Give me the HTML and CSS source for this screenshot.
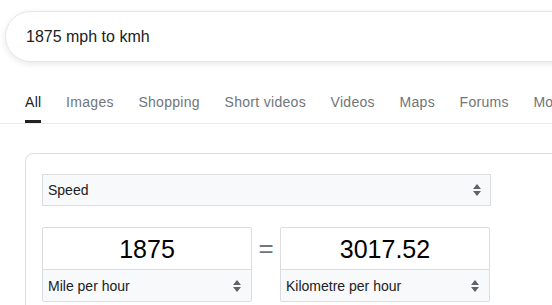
FILE: index.html
```html
<!DOCTYPE html>
<html lang="en">
<head>
    <meta charset="UTF-8">
    <meta name="viewport" content="width=device-width, initial-scale=1.0">
    <title>1875 mph to kmh</title>
    <link rel="stylesheet" href="styles.css">
</head>
<body>
    <div class="search-box">
        <span class="search-text">1875 mph to kmh</span>
    </div>

    <nav class="tabs">
        <span class="tab active">All</span>
        <span class="tab">Images</span>
        <span class="tab">Shopping</span>
        <span class="tab">Short videos</span>
        <span class="tab">Videos</span>
        <span class="tab">Maps</span>
        <span class="tab">Forums</span>
        <span class="tab">More</span>
    </nav>

    <div class="card">
        <div class="select wide">
            <span>Speed</span>
            <span class="arrows"><i class="up"></i><i class="down"></i></span>
        </div>

        <div class="convert-row">
            <div class="unit-box">
                <div class="value">1875</div>
                <div class="select">
                    <span>Mile per hour</span>
                    <span class="arrows"><i class="up"></i><i class="down"></i></span>
                </div>
            </div>
            <div class="equals">=</div>
            <div class="unit-box">
                <div class="value">3017.52</div>
                <div class="select">
                    <span>Kilometre per hour</span>
                    <span class="arrows"><i class="up"></i><i class="down"></i></span>
                </div>
            </div>
        </div>
    </div>
</body>
</html>
```

FILE: styles.css
```css
body {
    margin: 0;
    font-family: Arial, "Liberation Sans", sans-serif;
    color: #202124;
    background-color: #fff;
    overflow: hidden;
}
.search-box {
    display: flex;
    align-items: center;
    box-sizing: border-box;
    width: 760px;
    height: 51px;
    margin: 11px 0 0 5px;
    padding-left: 20px;
    border: 1px solid #e4e5e7;
    border-radius: 26px;
    box-shadow: 0 2px 6px rgba(32,33,36,0.1);
}
.search-text {
    font-size: 16px;
    color: #202124;
}
.tabs {
    display: flex;
    gap: 24.6px;
    margin-top: 30px;
    padding-left: 25px;
    border-bottom: 1px solid #ebebeb;
    white-space: nowrap;
}
.tab {
    font-size: 14px;
    line-height: 20px;
    letter-spacing: 0.3px;
    padding-bottom: 8px;
    border-bottom: 3px solid transparent;
    color: #70757a;
}
.tab.active {
    color: #202124;
    border-bottom-color: #202124;
}
.card {
    width: 640px;
    margin: 29px 0 0 25px;
    padding: 20px 16px;
    border: 1px solid #dadce0;
    border-radius: 8px;
}
.select {
    display: flex;
    align-items: center;
    justify-content: space-between;
    box-sizing: border-box;
    height: 31px;
    padding: 0 9px 0 5px;
    background-color: #f8f9fa;
    font-size: 14px;
    color: #202124;
}
.select.wide {
    width: 449px;
    height: 32px;
    border: 1px solid #dadce0;
}
.arrows {
    display: flex;
    flex-direction: column;
    gap: 2px;
}
.arrows i {
    width: 0;
    height: 0;
    border-left: 4px solid transparent;
    border-right: 4px solid transparent;
}
.arrows .up {
    border-bottom: 5px solid #5f6368;
}
.arrows .down {
    border-top: 5px solid #5f6368;
}
.convert-row {
    display: flex;
    align-items: flex-start;
    margin-top: 21px;
}
.unit-box {
    box-sizing: border-box;
    width: 210px;
    border: 1px solid #dadce0;
    border-radius: 2px;
    overflow: hidden;
}
.value {
    height: 41px;
    line-height: 42px;
    border-bottom: 1px solid #dadce0;
    text-align: center;
    font-size: 25px;
    color: #000;
}
.unit-box .select {
    padding-right: 10px;
}
.equals {
    width: 28px;
    line-height: 42px;
    text-align: center;
    font-size: 26px;
    color: #70757a;
}
```
